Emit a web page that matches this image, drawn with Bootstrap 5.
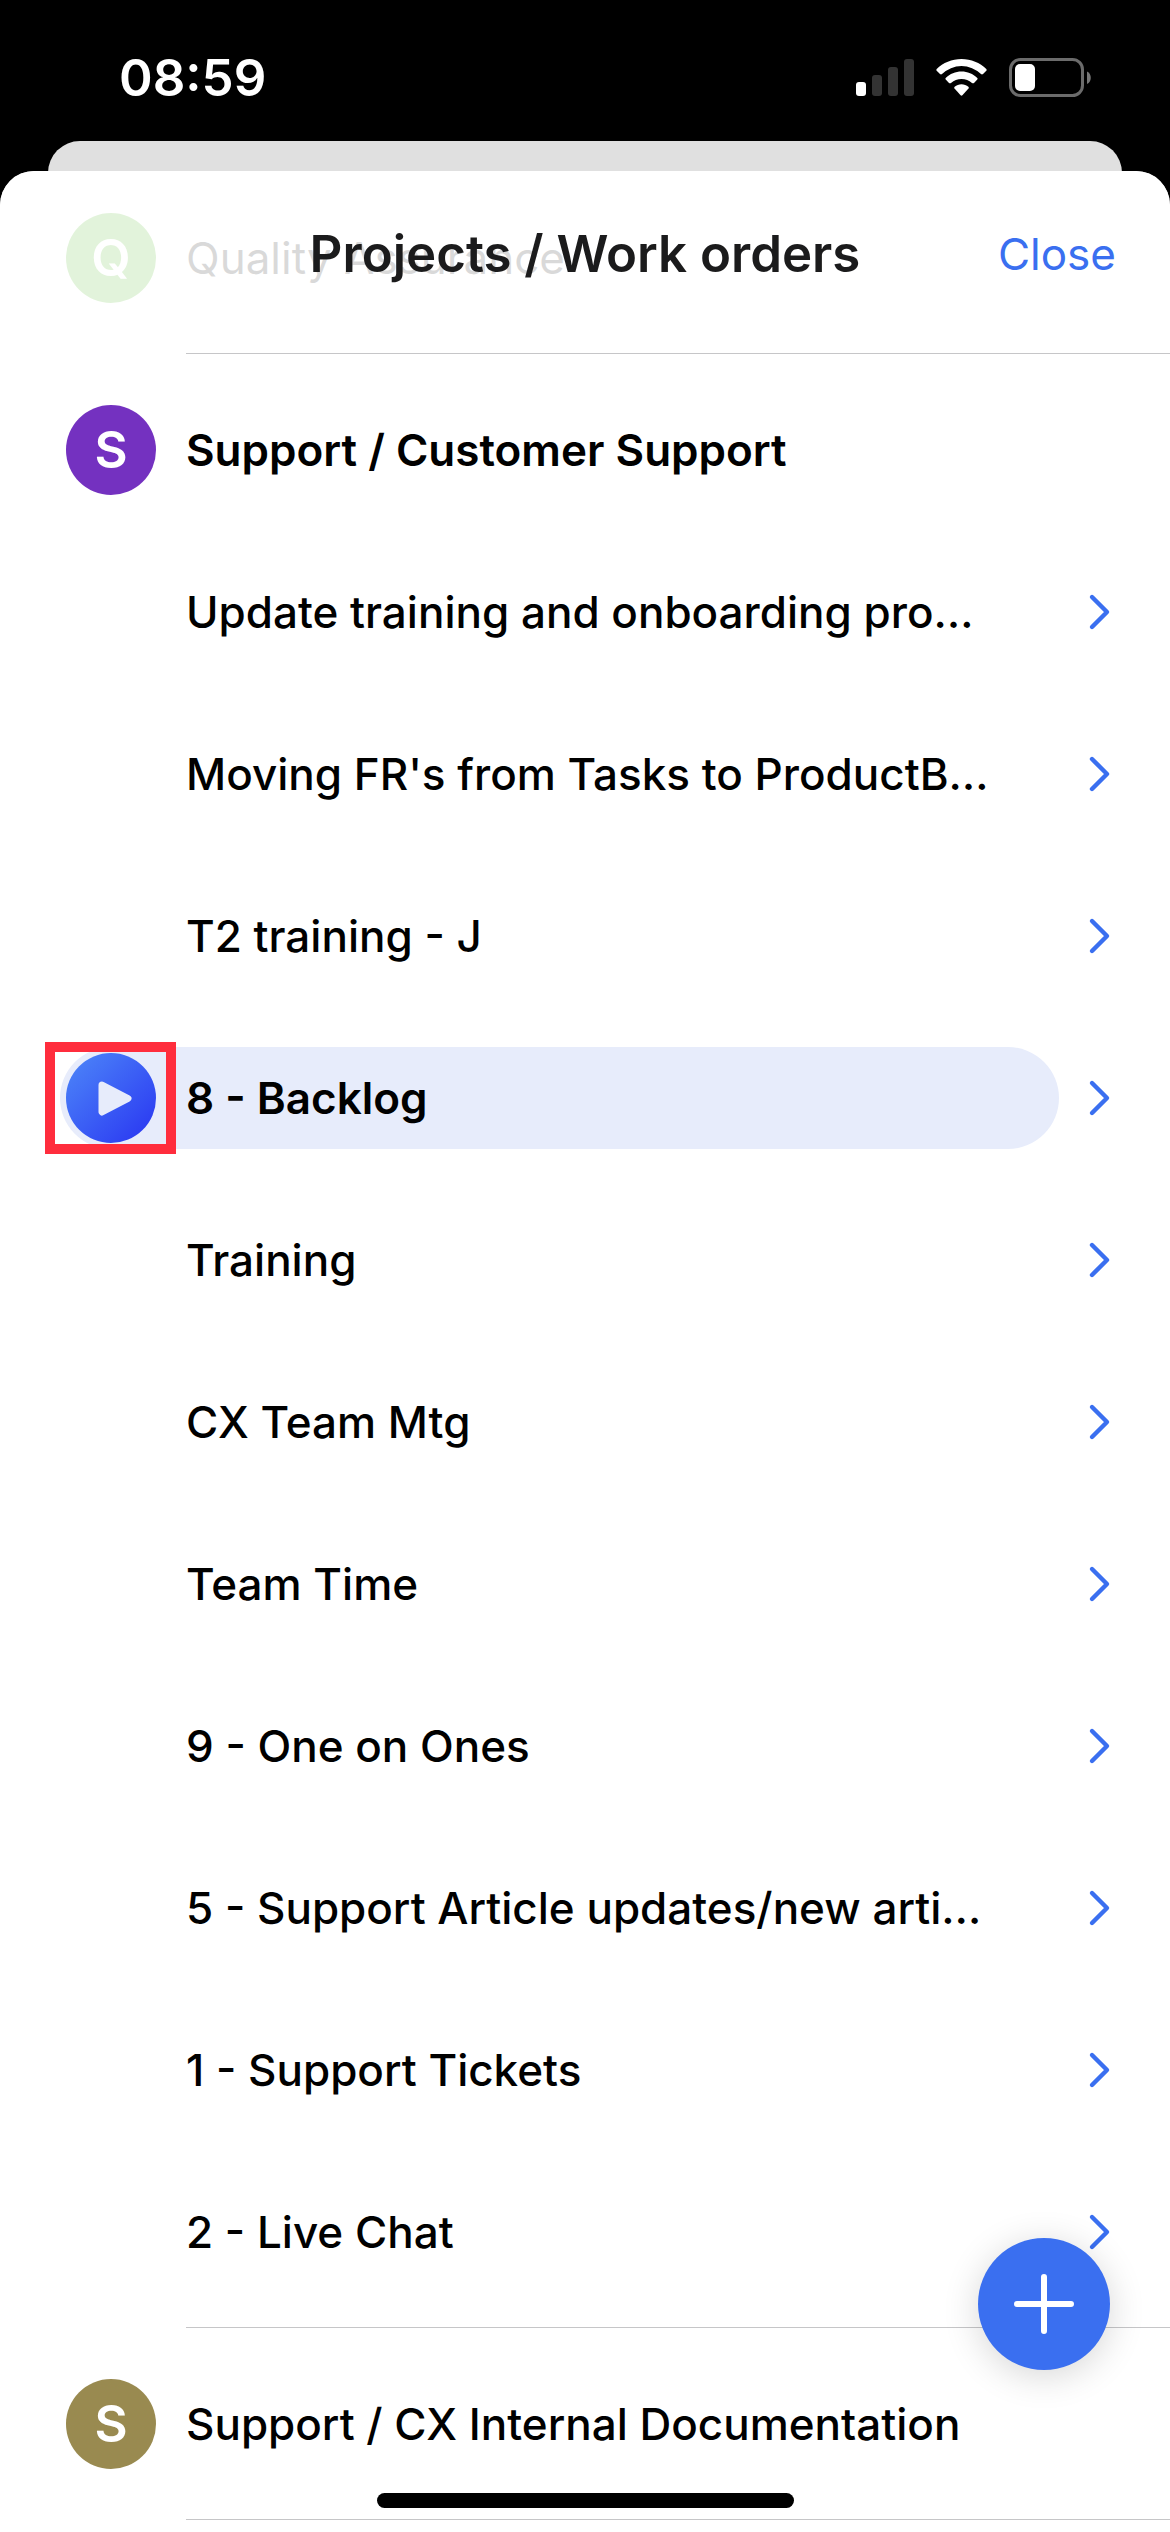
<!DOCTYPE html>
<html lang="en">
<head>
<meta charset="utf-8">
<meta name="viewport" content="width=device-width, initial-scale=1">
<title>Projects / Work orders</title>
<link href="https://cdn.jsdelivr.net/npm/bootstrap@5.3.0/dist/css/bootstrap.min.css" rel="stylesheet">
<style>
  :root { --accent: #3a6ff0; --line: #c6c6c8; }
  body { background: #000; color: #000; font-family: Inter, "Liberation Sans", sans-serif; font-size: 44px; line-height: 54px; font-weight: 500; }
  a, a:hover { color: inherit; text-decoration: none; }
  .status-bar { height: 141px; padding: 0 79px 0 119px; color: #fff; }
  .clock { font-size: 51px; font-weight: 600; line-height: 60px; padding-top: 15px; }
  .status-icons { gap: 22px; padding-top: 15px; }
  .back-sheet { height: 60px; margin: 0 48px -30px; background: #e0e0e0; border-radius: 32px 32px 0 0; }
  .sheet { background: #fff; border-radius: 34px 34px 0 0; overflow: hidden; }
  .sheet-head { height: 174px; background: rgba(255,255,255,.85); z-index: 2; padding: 0 54px; }
  .sheet-title { font-size: 51px; font-weight: 600; line-height: 60px; color: #1b1b1c; padding-bottom: 8px; }
  .close-btn { position: absolute; right: 54px; color: var(--accent); font: inherit; font-weight: 400; line-height: 60px; padding: 0 0 8px; border: 0; }
  .groups { padding-bottom: 12px; }
  .group { padding-top: 15px; }
  .group::after { content: ""; display: block; height: 1px; background: var(--line); margin: 14px 0 0 186px; }
  .group:first-child { padding-top: 6px; }
  .entry { height: 162px; padding-left: 60px; }
  .pill { height: 102px; border-radius: 51px; padding: 0 6px; gap: 30px; min-width: 0; }
  .pill-active { background: #e7ecfb; }
  .slot { width: 90px; height: 90px; }
  .avatar { color: #fff; font-size: 51px; font-weight: 600; }
  .avatar-green { background: #40b010; }
  .avatar-purple { background: #7431c0; }
  .avatar-olive { background: #998a50; }
  .play-btn { border: 0; padding: 0; background: linear-gradient(135deg, #4a80f8 10%, #2c3cf2 90%); }
  .callout-box { position: absolute; inset: -11px -20px -11px -21px; border: 10px solid #ff2d3d; pointer-events: none; }
  .go-btn { width: 111px; height: 102px; border: 0; padding: 0 0 0 29px; color: var(--accent); text-align: left; }
  .add-btn { position: fixed; right: 60px; bottom: 162px; width: 132px; height: 132px; border: 0; padding: 0; background: var(--accent); color: #fff; z-index: 3; box-shadow: 0 6px 36px rgba(0,0,0,.16); }
  .home-bar { position: fixed; left: 50%; bottom: 24px; width: 417px; height: 15px; margin-left: -208px; border-radius: 8px; background: #000; z-index: 3; }
  svg { display: block; }
</style>
</head>
<body>
<svg width="0" height="0" class="position-absolute" aria-hidden="true">
  <symbol id="chevron" viewBox="0 0 24 38"><path d="M4 4 19 19 4 34" fill="none" stroke="currentColor" stroke-width="4.4" stroke-linecap="round" stroke-linejoin="round"/></symbol>
</svg>

<header class="status-bar d-flex align-items-center justify-content-between">
  <span class="clock">08:59</span>
  <div class="status-icons d-flex align-items-center">
    <svg width="58" height="38" viewBox="0 0 58 38" role="img" aria-label="Signal">
      <rect x="0" y="23" width="10" height="14" rx="3" fill="#fff"/>
      <g fill="#333"><rect x="16" y="16" width="10" height="21" rx="3"/><rect x="32" y="8" width="10" height="29" rx="3"/><rect x="48" y="0" width="10" height="37" rx="3"/></g>
    </svg>
    <svg width="51" height="38" viewBox="0 0 51 38" fill="#fff" role="img" aria-label="Wi-Fi">
      <path d="M25.500 0C35 0 44 3.800 50.300 10Q51 11 50.300 11.700L47 15Q46 15.800 45 15A28 28 0 0 0 6 15Q5 15.800 4 15L.7 11.700Q0 11 .7 10C7 3.800 16 0 25.500 0Z"/>
      <path d="M25.500 12.600C31.500 12.600 37 15 41.300 18.900Q42 19.800 41.300 20.600L38 24Q37 24.700 36 24A16 16 0 0 0 15 24Q14 24.700 13 24L9.700 20.600Q9 19.800 9.700 18.900C14 15 19.500 12.600 25.500 12.600Z"/>
      <path d="M25.500 25.300C28 25.300 30.500 26.200 32.400 27.700Q33.300 28.600 32.500 29.500L26.400 36.300Q25.500 37.200 24.600 36.300L18.500 29.500Q17.700 28.600 18.600 27.700C20.500 26.200 23 25.300 25.500 25.300Z"/>
    </svg>
    <svg width="82" height="40" viewBox="0 0 82 40" role="img" aria-label="Battery">
      <rect x="1.500" y="1.500" width="72" height="36" rx="10" fill="none" stroke="#6b6b6b" stroke-width="3"/>
      <path d="M78 13.500C83 15.500 83 24 78 26Z" fill="#777"/>
      <rect x="6" y="6" width="20" height="27" rx="5" fill="#fff"/>
    </svg>
  </div>
</header>

<div class="back-sheet"></div>

<main class="sheet position-relative">
  <div class="sheet-head position-absolute top-0 start-0 end-0 d-flex align-items-center justify-content-center">
    <h1 class="sheet-title m-0">Projects / Work orders</h1>
    <button type="button" class="close-btn bg-transparent">Close</button>
  </div>

  <div class="groups">
    <section class="group">
      <div class="entry d-flex align-items-center">
        <a href="#" class="pill d-flex align-items-center flex-grow-1"><span class="slot avatar avatar-green rounded-circle d-flex align-items-center justify-content-center flex-shrink-0">Q</span><span class="fw-normal text-truncate">Quality Assurance</span></a>
      </div>
    </section>

    <section class="group">
      <div class="entry d-flex align-items-center">
        <a href="#" class="pill d-flex align-items-center flex-grow-1"><span class="slot avatar avatar-purple rounded-circle d-flex align-items-center justify-content-center flex-shrink-0">S</span><span class="fw-semibold text-truncate">Support / Customer Support</span></a>
      </div>
      <ul class="list-unstyled m-0">
        <li class="entry d-flex align-items-center">
          <a href="#" class="pill d-flex align-items-center flex-grow-1"><span class="slot flex-shrink-0"></span><span class="text-truncate">Update training and onboarding pro…</span></a>
          <button type="button" class="go-btn bg-transparent flex-shrink-0" aria-label="Open"><svg width="24" height="38"><use href="#chevron"/></svg></button>
        </li>
        <li class="entry d-flex align-items-center">
          <a href="#" class="pill d-flex align-items-center flex-grow-1"><span class="slot flex-shrink-0"></span><span class="text-truncate">Moving FR's from Tasks to ProductB…</span></a>
          <button type="button" class="go-btn bg-transparent flex-shrink-0" aria-label="Open"><svg width="24" height="38"><use href="#chevron"/></svg></button>
        </li>
        <li class="entry d-flex align-items-center">
          <a href="#" class="pill d-flex align-items-center flex-grow-1"><span class="slot flex-shrink-0"></span><span class="text-truncate">T2 training - J</span></a>
          <button type="button" class="go-btn bg-transparent flex-shrink-0" aria-label="Open"><svg width="24" height="38"><use href="#chevron"/></svg></button>
        </li>
        <li class="entry d-flex align-items-center">
          <div class="pill pill-active d-flex align-items-center flex-grow-1">
            <div class="slot position-relative flex-shrink-0">
              <button type="button" class="play-btn slot rounded-circle d-flex align-items-center justify-content-center" aria-label="Start">
                <svg width="90" height="90" viewBox="0 0 90 90"><path d="M36 32 62 45.500 36 59Z" fill="#e7ecfb" stroke="#e7ecfb" stroke-width="7" stroke-linejoin="round"/></svg>
              </button>
              <span class="callout-box"></span>
            </div>
            <a href="#" class="fw-semibold text-truncate">8 - Backlog</a>
          </div>
          <button type="button" class="go-btn bg-transparent flex-shrink-0" aria-label="Open"><svg width="24" height="38"><use href="#chevron"/></svg></button>
        </li>
        <li class="entry d-flex align-items-center">
          <a href="#" class="pill d-flex align-items-center flex-grow-1"><span class="slot flex-shrink-0"></span><span class="text-truncate">Training</span></a>
          <button type="button" class="go-btn bg-transparent flex-shrink-0" aria-label="Open"><svg width="24" height="38"><use href="#chevron"/></svg></button>
        </li>
        <li class="entry d-flex align-items-center">
          <a href="#" class="pill d-flex align-items-center flex-grow-1"><span class="slot flex-shrink-0"></span><span class="text-truncate">CX Team Mtg</span></a>
          <button type="button" class="go-btn bg-transparent flex-shrink-0" aria-label="Open"><svg width="24" height="38"><use href="#chevron"/></svg></button>
        </li>
        <li class="entry d-flex align-items-center">
          <a href="#" class="pill d-flex align-items-center flex-grow-1"><span class="slot flex-shrink-0"></span><span class="text-truncate">Team Time</span></a>
          <button type="button" class="go-btn bg-transparent flex-shrink-0" aria-label="Open"><svg width="24" height="38"><use href="#chevron"/></svg></button>
        </li>
        <li class="entry d-flex align-items-center">
          <a href="#" class="pill d-flex align-items-center flex-grow-1"><span class="slot flex-shrink-0"></span><span class="text-truncate">9 - One on Ones</span></a>
          <button type="button" class="go-btn bg-transparent flex-shrink-0" aria-label="Open"><svg width="24" height="38"><use href="#chevron"/></svg></button>
        </li>
        <li class="entry d-flex align-items-center">
          <a href="#" class="pill d-flex align-items-center flex-grow-1"><span class="slot flex-shrink-0"></span><span class="text-truncate">5 - Support Article updates/new arti…</span></a>
          <button type="button" class="go-btn bg-transparent flex-shrink-0" aria-label="Open"><svg width="24" height="38"><use href="#chevron"/></svg></button>
        </li>
        <li class="entry d-flex align-items-center">
          <a href="#" class="pill d-flex align-items-center flex-grow-1"><span class="slot flex-shrink-0"></span><span class="text-truncate">1 - Support Tickets</span></a>
          <button type="button" class="go-btn bg-transparent flex-shrink-0" aria-label="Open"><svg width="24" height="38"><use href="#chevron"/></svg></button>
        </li>
        <li class="entry d-flex align-items-center">
          <a href="#" class="pill d-flex align-items-center flex-grow-1"><span class="slot flex-shrink-0"></span><span class="text-truncate">2 - Live Chat</span></a>
          <button type="button" class="go-btn bg-transparent flex-shrink-0" aria-label="Open"><svg width="24" height="38"><use href="#chevron"/></svg></button>
        </li>
      </ul>
    </section>

    <section class="group">
      <div class="entry d-flex align-items-center">
        <a href="#" class="pill d-flex align-items-center flex-grow-1"><span class="slot avatar avatar-olive rounded-circle d-flex align-items-center justify-content-center flex-shrink-0">S</span><span class="text-truncate">Support / CX Internal Documentation</span></a>
      </div>
    </section>
  </div>
</main>

<button type="button" class="add-btn rounded-circle d-flex align-items-center justify-content-center" aria-label="Add">
  <svg width="60" height="60" viewBox="0 0 60 60"><path d="M30 3V57M3 30H57" stroke="currentColor" stroke-width="6" stroke-linecap="round"/></svg>
</button>
<div class="home-bar"></div>
<script src="https://cdn.jsdelivr.net/npm/bootstrap@5.3.0/dist/js/bootstrap.bundle.min.js"></script>
</body>
</html>
